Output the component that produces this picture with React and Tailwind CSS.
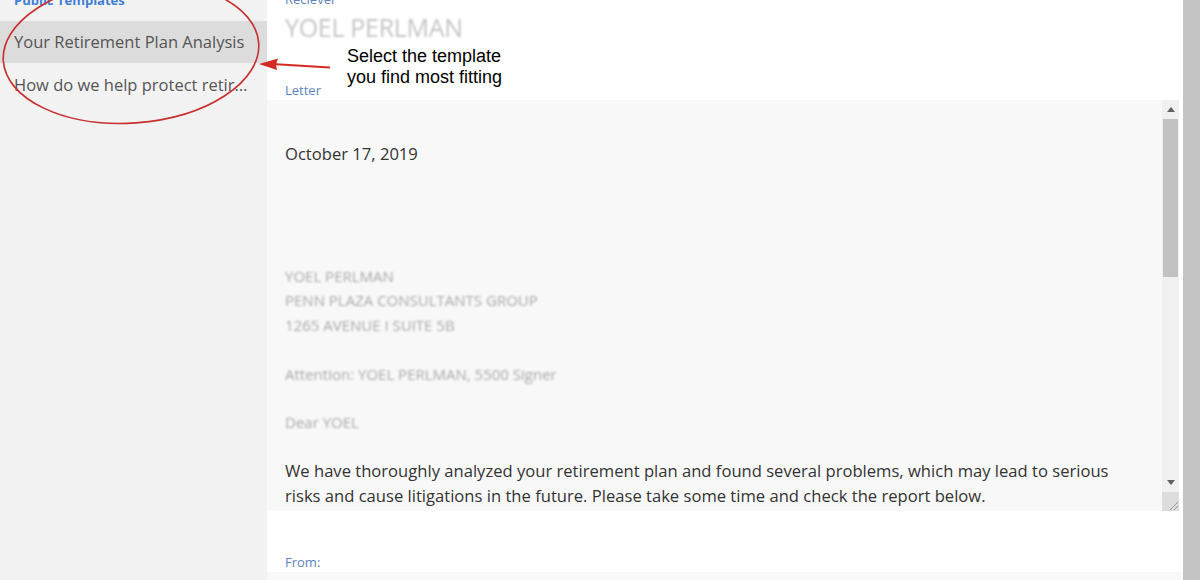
import React from "react";

const font = { fontFamily: '"Open Sans", "Noto Sans", sans-serif' };

export default function App() {
  return (
    <div
      className="relative w-[1200px] h-[580px] overflow-hidden flex bg-white"
      style={font}
    >
      {/* Sidebar */}
      <div className="w-[267px] shrink-0 bg-[#f2f2f2] flex flex-col">
        <div className="-mt-[8px] pl-[14px] h-[29px] text-[13px] font-bold text-[#3f7fd6] leading-[16px]">
          Public Templates
        </div>
        <div className="h-[42px] bg-[#dcdcdc] pl-[14px] flex items-center text-[16.5px] text-[#555] whitespace-nowrap">
          Your Retirement Plan Analysis
        </div>
        <div className="h-[44px] pl-[14px] pr-[14px] flex items-center text-[16.5px] text-[#555] whitespace-nowrap overflow-hidden">
          <span className="truncate">How do we help protect retirement plans</span>
        </div>
      </div>

      {/* Main */}
      <div className="w-[914px] shrink-0 flex flex-col bg-white">
        <div className="-mt-[9px] pl-[18px] h-[16px] text-[13px] leading-[16px] text-[#5b82bd]">
          Reciever
        </div>
        <div className="pl-[18px] pt-[5px] h-[76px] text-[25px] leading-[30px] text-[#c4c4c4] blur-[1.3px] tracking-[-0.3px]">
          YOEL PERLMAN
        </div>
        <div className="pl-[18px] h-[17px] text-[13px] leading-[14px] text-[#5b82bd]">
          Letter
        </div>
        {/* textarea */}
        <div className="h-[411px] bg-[#f8f8f8] flex">
          <div className="flex-1 pl-[18px] pt-[42px] pr-[40px] text-[16.6px] leading-[24.4px] text-[#333] overflow-hidden">
            <div>October 17, 2019</div>
            <div className="h-[97.6px]"></div>
            <div className="text-[#a9a9a9] blur-[1.2px] text-[15px]">
              <div>YOEL PERLMAN</div>
              <div>PENN PLAZA CONSULTANTS GROUP</div>
              <div>1265 AVENUE I SUITE 5B</div>
              <div className="h-[24.4px]"></div>
              <div>Attention: YOEL PERLMAN, 5500 Signer</div>
              <div className="h-[24.4px]"></div>
              <div>Dear YOEL</div>
            </div>
            <div className="h-[24.4px]"></div>
            <div>
              We have thoroughly analyzed your retirement plan and found several problems, which may lead to serious
              risks and cause litigations in the future. Please take some time and check the report below.
            </div>
          </div>
          {/* scrollbar */}
          <div className="w-[17px] flex flex-col bg-[#f0f0f0]">
            <div className="h-[19px] flex items-center justify-center">
              <svg width="8" height="5" viewBox="0 0 8 5">
                <path d="M0 5 L4 0 L8 5 Z" fill="#606060" />
              </svg>
            </div>
            <div className="h-[158px] mx-[1px] bg-[#c2c2c2]"></div>
            <div className="flex-1"></div>
            <div className="h-[19px] flex items-center justify-center">
              <svg width="8" height="5" viewBox="0 0 8 5">
                <path d="M0 0 L4 5 L8 0 Z" fill="#606060" />
              </svg>
            </div>
            <div className="h-[19px] bg-[#dcdcdc] flex items-end justify-end">
              <svg width="12" height="12" viewBox="0 0 12 12">
                <path d="M11 3 L3 11 M11 7 L7 11" stroke="#9a9a9a" strokeWidth="1" />
              </svg>
            </div>
          </div>
          <div className="w-[2px] bg-white"></div>
        </div>
        <div className="h-[43px] bg-white"></div>
        <div className="pl-[18px] h-[18px] text-[13px] leading-[16px] text-[#5b82bd]">
          From:
        </div>
        <div className="flex-1 bg-[#f8f8f8]"></div>
      </div>

      <div className="w-[2px] bg-white"></div>
      {/* page scrollbar */}
      <div className="flex-1 bg-[#c4c4c4]"></div>

      {/* Annotation overlay */}
      <svg
        className="absolute left-0 top-0 pointer-events-none"
        width="1200"
        height="580"
      >
        <ellipse
          cx="131"
          cy="52"
          rx="128"
          ry="71"
          transform="rotate(-4 131 52)"
          fill="none"
          stroke="#c8302e"
          strokeWidth="1.6"
        />
        <line x1="330" y1="67.5" x2="272" y2="64" stroke="#d42a24" strokeWidth="2" />
        <path d="M259 64 L278 58.5 L276 64.5 L277 70 Z" fill="#d42a24" />
      </svg>
      <div
        className="absolute left-[347px] top-[46px] text-[18px] leading-[21px] text-black pointer-events-none"
        style={{ fontFamily: '"Liberation Sans", Arial, sans-serif' }}
      >
        <div>Select the template</div>
        <div>you find most fitting</div>
      </div>
    </div>
  );
}
